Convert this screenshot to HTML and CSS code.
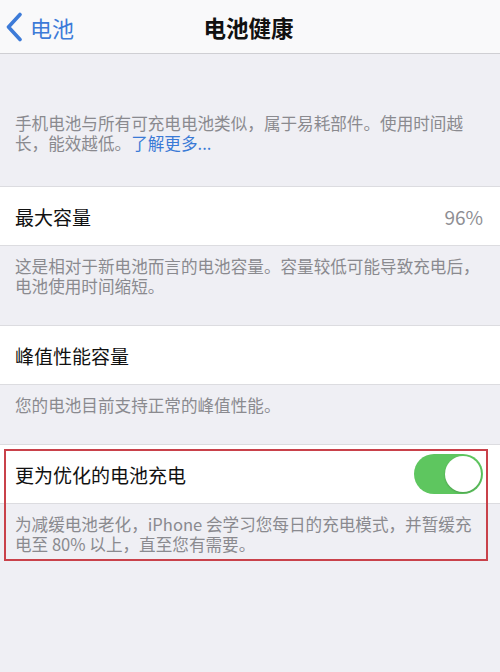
FILE: index.html
```html
<!DOCTYPE html>
<html lang="zh-CN">
<head>
<meta charset="utf-8">
<link rel="stylesheet" href="styles.css">
</head>
<body>
<header class="nav">
  <div class="back">
    <svg class="chev" width="18" height="30" viewBox="0 0 18 30"><path d="M15 2.5 L3.5 15 L15 27.5" fill="none" stroke="#3d7bd8" stroke-width="3.6" stroke-linecap="round" stroke-linejoin="round"/></svg>
    <span>电池</span>
  </div>
  <div class="title">电池健康</div>
  <div></div>
</header>

<p class="note note-first">手机电池与所有可充电电池类似，属于易耗部件。使用时间越<br>长，能效越低。<span class="link">了解更多...</span></p>

<div class="row row-first">
  <span class="label">最大容量</span>
  <span class="value">96%</span>
</div>
<p class="note">这是相对于新电池而言的电池容量。容量较低可能导致充电后，<br>电池使用时间缩短。</p>

<div class="row">
  <span class="label">峰值性能容量</span>
</div>
<p class="note">您的电池目前支持正常的峰值性能。</p>

<section class="highlight">
  <div class="row">
    <span class="label">更为优化的电池充电</span>
    <span class="toggle"><span class="knob"></span></span>
  </div>
  <p class="note">为减缓电池老化，iPhone 会学习您每日的充电模式，并暂缓充<br>电至 80% 以上，直至您有需要。</p>
  <div class="redbox"></div>
</section>
</body>
</html>
```
FILE: styles.css
```css
html, body {
  margin: 0;
  padding: 0;
}
body {
  width: 500px;
  height: 672px;
  overflow: hidden;
  background: #efeff4;
  font-family: "Noto Sans CJK SC", "Noto Sans", sans-serif;
}
.nav {
  height: 53px;
  background: #f9f9fa;
  border-bottom: 1px solid #cfcfd3;
  display: grid;
  grid-template-columns: 1fr auto 1fr;
  align-items: center;
}
.back {
  display: flex;
  align-items: center;
  gap: 7px;
  padding-left: 5px;
  color: #3d7bd8;
  font-size: 22px;
  line-height: 30px;
}
.chev {
  display: block;
}
.title {
  font-size: 22.5px;
  font-weight: 600;
  color: #111;
  padding-right: 3px;
}
.note {
  margin: 0;
  padding: 10px 20px 0 15px;
  font-size: 16.6px;
  line-height: 20px;
  color: #8a8a8f;
  white-space: nowrap;
}
.note-first {
  padding-top: 0;
  margin-top: 59px;
}
.link {
  color: #3a7ad6;
}
.row {
  margin-top: 29px;
  height: 58px;
  background: #fff;
  border-top: 1px solid #dcdce0;
  border-bottom: 1px solid #dcdce0;
  display: flex;
  align-items: center;
  justify-content: space-between;
  padding: 0 17px 0 15px;
}
.row-first {
  margin-top: 33px;
}
.label {
  font-size: 19px;
  color: #111;
}
.value {
  font-size: 19px;
  color: #8e8e93;
}
.highlight {
  position: relative;
}
.toggle {
  width: 69px;
  height: 40px;
  border-radius: 20px;
  background: #5ec65f;
  display: flex;
  align-items: center;
  justify-content: flex-end;
  padding: 0 2px;
  box-sizing: border-box;
}
.knob {
  width: 36px;
  height: 36px;
  border-radius: 50%;
  background: #fff;
  box-shadow: 0 1px 2px rgba(0,0,0,0.2);
}
.redbox {
  position: absolute;
  left: 4px;
  top: 5px;
  width: 484px;
  height: 112px;
  border: 2.5px solid #c9414a;
  box-sizing: border-box;
  pointer-events: none;
}
```
